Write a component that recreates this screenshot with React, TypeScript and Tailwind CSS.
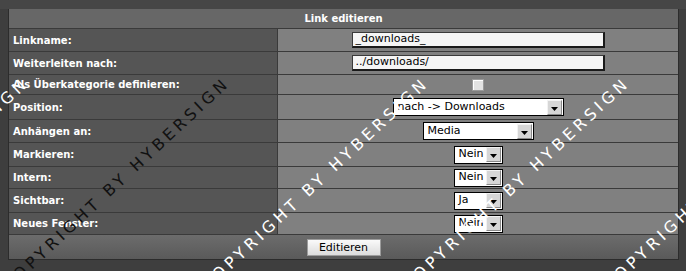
import React from "react";

const Label = ({ children }: { children: React.ReactNode }) => (
  <div className="w-[268px] bg-[#555555] flex items-center pl-[4px] text-[10px] font-bold text-white">
    {children}
  </div>
);

const Value = ({ children }: { children?: React.ReactNode }) => (
  <div className="flex-1 bg-[#808080] flex items-center justify-center">{children}</div>
);

const Arrow = () => (
  <div className="w-[15px] h-[15px] mr-px bg-[#d6d6d6] border-t border-l border-[#f2f2f2] border-r border-b border-r-[#8a8a8a] border-b-[#8a8a8a] flex items-end justify-center pb-[3px]">
    <svg width="7" height="4" viewBox="0 0 7 4">
      <polygon points="0,0 7,0 3.5,4" fill="#000" />
    </svg>
  </div>
);

const Select = ({ text, w }: { text: string; w: string }) => (
  <div className={`${w} h-[18px] bg-white border border-black flex items-center`}>
    <span className="flex-1 pl-[4px] text-[11px] text-black whitespace-nowrap overflow-hidden">{text}</span>
    <Arrow />
  </div>
);

const Input = ({ value }: { value: string }) => (
  <div className="w-[253px] h-[16px] bg-[#f5f5f5] border border-[#3a3a3a] border-b-2 border-r-2 border-b-[#1a1a1a] border-r-[#1a1a1a] flex items-center pl-[3px] text-[11px] text-black">
    {value}
  </div>
);

const Row = ({ h, label, children }: { h: string; label: string; children?: React.ReactNode }) => (
  <div className={`${h} flex gap-px`}>
    <Label>{label}</Label>
    <Value>{children}</Value>
  </div>
);

// watermark over the whole form
const Mark = ({ pos, dark }: { pos: string; dark?: boolean }) => (
  <span
    className={`absolute ${pos} origin-left -rotate-[43deg] text-[16px] leading-[16px] tracking-[4px] whitespace-nowrap pointer-events-none ${
      dark ? "text-[#111111]" : "text-white"
    }`}
  >
    COPYRIGHT BY HYBERSIGN
  </span>
);

export default function App() {
  return (
    <div className="relative w-[686px] h-[271px] overflow-hidden bg-[#3e3e3e] font-['DejaVu_Sans',sans-serif]">
      <div className="h-[9px] bg-[#464646]" />
      <div className="ml-[8px] w-[671px] border-x border-b border-[#2c2c2c] bg-[#3a3a3a] flex flex-col gap-px">
        <div className="h-[19px] bg-[#676767] flex items-center justify-center text-[10px] font-bold text-white">
          Link editieren
        </div>
        <Row h="h-[22px]" label="Linkname:">
          <Input value="_downloads_" />
        </Row>
        <Row h="h-[22px]" label="Weiterleiten nach:">
          <Input value="../downloads/" />
        </Row>
        <Row h="h-[19px]" label="Als Überkategorie definieren:">
          <div className="w-[12px] h-[12px] bg-[#e2e2e2] border border-[#9a9a9a] shadow-[inset_1px_1px_0_#ffffff]" />
        </Row>
        <Row h="h-[24px]" label="Position:">
          <Select text="nach -> Downloads" w="w-[171px]" />
        </Row>
        <Row h="h-[22px]" label="Anhängen an:">
          <Select text="Media" w="w-[111px]" />
        </Row>
        <Row h="h-[23px]" label="Markieren:">
          <Select text="Nein" w="w-[49px]" />
        </Row>
        <Row h="h-[21px]" label="Intern:">
          <Select text="Nein" w="w-[49px]" />
        </Row>
        <Row h="h-[23px]" label="Sichtbar:">
          <Select text="Ja" w="w-[49px]" />
        </Row>
        <Row h="h-[21px]" label="Neues Fenster:">
          <Select text="Nein" w="w-[49px]" />
        </Row>
        <div className="h-[24px] bg-gradient-to-b from-[#6c6c6c] to-[#5a5a5a] flex items-center justify-center">
          <button className="w-[74px] h-[17px] bg-gradient-to-b from-[#fafafa] to-[#dcdcdc] border border-[#9c9c9c] text-[11px] text-black leading-none">
            Editieren
          </button>
        </div>
      </div>

      <Mark pos="left-[-196px] top-[280px]" />
      <Mark pos="left-[5px] top-[280px]" dark />
      <Mark pos="left-[204px] top-[280px]" />
      <Mark pos="left-[405px] top-[280px]" />
      <Mark pos="left-[606px] top-[280px]" />
    </div>
  );
}
